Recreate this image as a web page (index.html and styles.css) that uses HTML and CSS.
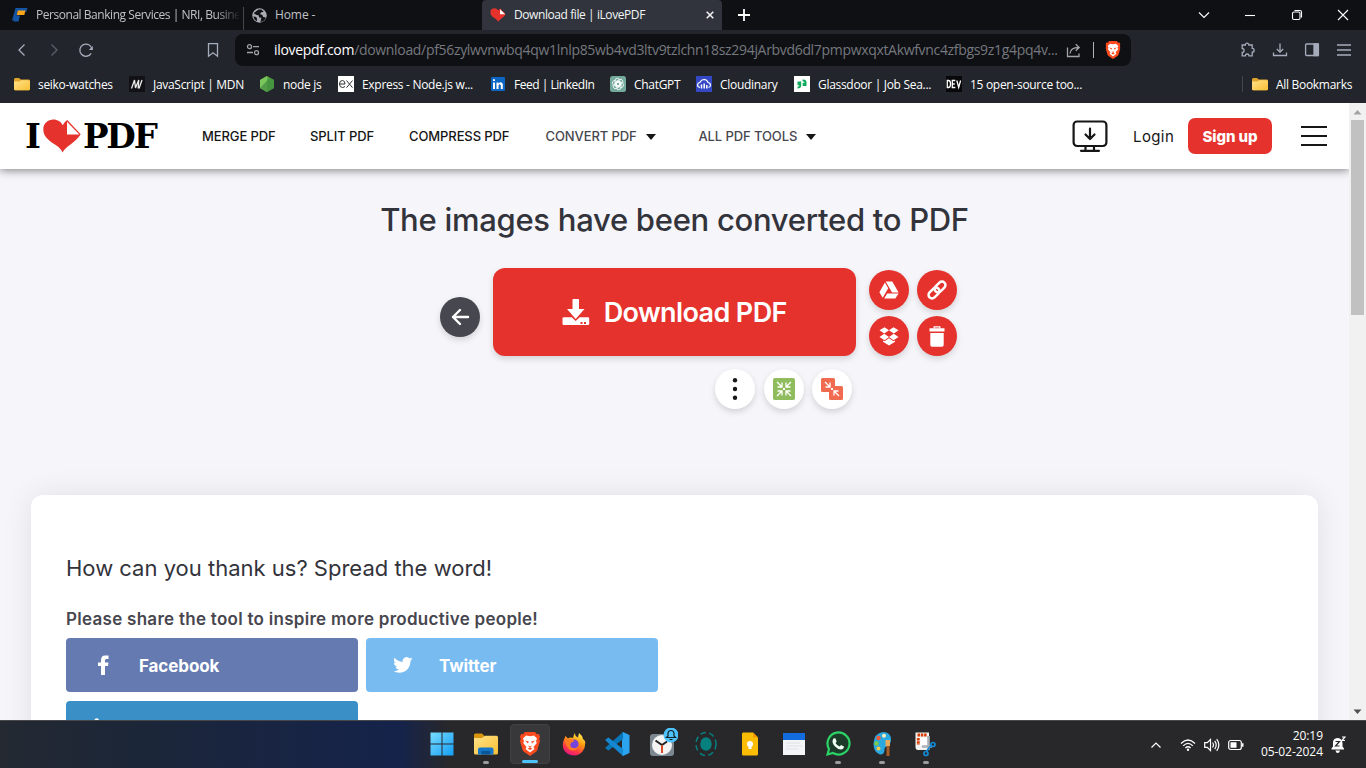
FILE: index.html
```html
<!DOCTYPE html>
<html lang="en">
<head>
<meta charset="utf-8">
<title>Download file | iLovePDF</title>
<link rel="stylesheet" href="styles.css">
</head>
<body>
<svg class="defs" width="0" height="0" aria-hidden="true">
  <defs>
    <linearGradient id="gold" x1="0" y1="0" x2="1" y2="1"><stop offset="0" stop-color="#ffe38a"/><stop offset="1" stop-color="#f8bf33"/></linearGradient>
    <linearGradient id="win" x1="0" y1="0" x2="1" y2="1"><stop offset="0" stop-color="#78dcff"/><stop offset="1" stop-color="#149df5"/></linearGradient>
    <linearGradient id="fox" x1="0.8" y1="0" x2="0.3" y2="1"><stop offset="0" stop-color="#fff44f"/><stop offset=".4" stop-color="#ff980e"/><stop offset=".75" stop-color="#ff3647"/><stop offset="1" stop-color="#e31587"/></linearGradient>
    <symbol id="folder" viewBox="0 0 16 16"><path d="M0 3.500Q0 2 1.400 2H5l1.700 1.600H14.500Q16 3.600 16 5V13Q16 14.300 14.600 14.300H1.400Q0 14.300 0 13Z" fill="#e0a52c"/><path d="M0 5.400H5.500L7 4.200H14.600Q16 4.200 16 5.400V13Q16 14.300 14.600 14.300H1.400Q0 14.300 0 13Z" fill="url(#gold)"/></symbol>
    <symbol id="brave" viewBox="0 0 20 24"><path d="M5 0H15L17 2.200 19 2 20 5 19.200 7 20 9 17.300 18.200Q17 19 15 20.500L10 24 5 20.500Q3 19 2.700 18.200L0 9 .8 7 0 5 1 2 3 2.200Z" fill="#fb4a1e"/><path d="M6 3.500 10 4.200 14 3.500 17 6.500 16 9 16.800 11 13.500 15 14.500 17 10 20.500 5.500 17 6.500 15 3.200 11 4 9 3 6.500Z" fill="#fff"/><path d="M5 8.500 8.800 9.500 8 11.500ZM15 8.500 11.200 9.500 12 11.500ZM8.200 13.500 10 14.500 11.800 13.500 10.800 15.500H9.200ZM7.500 16.500 10 15.700 12.500 16.500 10 18Z" fill="#fb4a1e"/></symbol>
    <symbol id="heart" viewBox="0 0 38 34"><path d="M19.500 33.500Q18 29.500 12 25.500C5 21 .3 17.200.3 10.200C.3 4.500 5 .6 10.500.6C14.500.6 18 2.800 19.700 6.200Q21.500 2.700 24.300 1L37.700 15.300C34.500 20.200 31.500 22.400 27.500 25.500Q21.500 29.700 19.500 33.500Z" fill="#e5322d"/><path d="M24 2.800V15.400H36.300Z" fill="#fff"/></symbol>
  </defs>
</svg>

<header class="browser">
  <div class="tabs">
    <div class="tab first">
      <svg width="16" height="16" viewBox="0 0 16 16"><path d="M3.500 1H15.500L14.600 4.500H5.500L3.800 13.500H0Z" fill="#1455a4"/><path d="M5.800 3.500H13.500L12.300 8H4.800Z" fill="#f9a61c"/><path d="M4 8.500H8L6.500 14.500H1.500Z" fill="#1455a4"/></svg>
      <span class="label fade">Personal Banking Services | NRI, Busine</span>
    </div>
    <div class="tab second">
      <svg width="15" height="15" viewBox="0 0 16 16"><circle cx="8" cy="8" r="7.700" fill="#a9adb3"/><path d="M7 1.500Q4 3 2 5.800L5 7.500 7 7.800 7.700 10 10 10.500 9 14.800Q13.700 14 14.800 10L12 9.500 11 7.500 8.500 6.500 10 4.500 12.500 4 10 1.500Z" fill="#121317"/><path d="M1.500 9 4.500 9.500 5.500 12 5 14Q2 12.500 1.500 9Z" fill="#121317"/></svg>
      <span class="label home">Home -</span>
    </div>
    <div class="tab active">
      <svg width="16" height="14" viewBox="0 0 38 34"><use href="#heart"/></svg>
      <span class="label">Download file | iLovePDF</span>
      <svg class="close" width="8" height="8" viewBox="0 0 8 8"><path d="M.7.7 7.300 7.300M7.300.7.700 7.300" stroke="#f0f0f2" stroke-width="1.600"/></svg>
    </div>
    <svg class="plus" width="12" height="12" viewBox="0 0 12 12"><path d="M6 0V12M0 6H12" stroke="#fff" stroke-width="1.800"/></svg>
    <div class="window-buttons">
      <svg viewBox="0 0 12 12"><path d="M1 3.500 6 8.500 11 3.500" /></svg>
      <svg viewBox="0 0 12 12"><path d="M1 6.500H11"/></svg>
      <svg viewBox="0 0 12 12"><rect x="1.500" y="3" width="7.500" height="7.500" rx="1.500"/><path d="M3.500 1.500H9Q10.500 1.500 10.500 3V8.500"/></svg>
      <svg viewBox="0 0 12 12"><path d="M1 1 11 11M11 1 1 11"/></svg>
    </div>
  </div>

  <div class="toolbar">
    <div class="nav-buttons">
      <svg width="16" height="16" viewBox="0 0 16 16"><path d="M10.500 2.500 5 8 10.500 13.500"/></svg>
      <svg class="dim" width="16" height="16" viewBox="0 0 16 16"><path d="M5.500 2.500 11 8 5.500 13.500"/></svg>
      <svg width="16" height="16" viewBox="0 0 16 16"><path d="M13.200 11.300A6.100 6.100 0 1 1 14 7.300"/><path d="M14.800 4V8H10.800Z" fill="#a5acbb" stroke="none"/></svg>
      <svg class="mark" width="16" height="16" viewBox="0 0 16 16"><path d="M3.500 1.700H12.500V14.200L8 10.700 3.500 14.200Z"/></svg>
    </div>
    <div class="address">
      <svg width="14" height="14" viewBox="0 0 14 14" class="line"><circle cx="3.500" cy="3.700" r="2"/><path d="M7 3.700H13M1 9.500H7"/><circle cx="10.500" cy="9.700" r="2"/></svg>
      <span class="url"><b>ilovepdf.com</b>/download/pf56zylwvnwbq4qw1lnlp85wb4vd3ltv9tzlchn18sz294jArbvd6dl7pmpwxqxtAkwfvnc4zfbgs9z1g4pq4v...</span>
      <svg width="15" height="15" viewBox="0 0 15 15" class="line"><path d="M1.500 4.500V13.500H13V10.500M4 10.500Q4.500 4.500 12.500 4.500M9.700 1.200 13.200 4.500 9.700 7.800"/></svg>
      <i class="bar"></i>
      <svg width="16" height="18" viewBox="0 0 20 24"><use href="#brave"/></svg>
    </div>
    <div class="tools">
      <svg width="16" height="16" viewBox="0 0 16 16"><path d="M2.200 3H5.300A1.800 1.800 0 0 1 8.900 3H12.200V6.300A1.900 1.900 0 0 1 12.200 10.200V13.800H9A1.800 1.800 0 0 0 5.400 13.800H2.200V10.300A1.900 1.900 0 0 0 2.200 6.500Z"/></svg>
      <svg width="16" height="16" viewBox="0 0 16 16"><path d="M8 1.500V10M4.800 7 8 10.200 11.200 7M1.500 10.500V13.500H14.500V10.500"/></svg>
      <svg width="16" height="16" viewBox="0 0 16 16"><rect x="1.600" y="2" width="12.800" height="11.500" rx="1"/><path d="M10 2H14.400V13.500H10Z" fill="#a5acbb"/></svg>
      <svg width="16" height="16" viewBox="0 0 16 16"><path d="M1 3H15M1 8H15M1 13H15"/></svg>
    </div>
  </div>

  <nav class="bookmarks">
    <span class="bm"><svg viewBox="0 0 16 16"><use href="#folder"/></svg>seiko-watches</span>
    <span class="bm"><svg viewBox="0 0 16 16"><rect width="16" height="16" fill="#121216"/><path d="M2.500 12.500 5.500 4 6.500 12 9.700 4 9.200 12.500M10 12.500 13 4" fill="none" stroke="#e8e8e8" stroke-width="1.300"/></svg>JavaScript | MDN</span>
    <span class="bm"><svg viewBox="0 0 16 16"><path d="M8 0 15 4V12L8 16 1 12V4Z" fill="#58a944"/><path d="M8 0 1 4V12L8 16Z" fill="#7cc45c"/><path d="M1 12 11 1.700 15 4V12L8 16Z" fill="#3f8b3d" opacity=".7"/></svg>node js</span>
    <span class="bm"><svg viewBox="0 0 16 16"><rect width="16" height="16" fill="#fff"/><path d="M1.500 8H7Q7 4.500 4.300 4.500 1.500 4.500 1.500 8T4.500 11.500Q6.200 11.500 7 10.300M8.500 4.500 14.500 11.700M14.500 4.500 8.500 11.700" fill="none" stroke="#333" stroke-width="1"/></svg>Express - Node.js w...</span>
    <span class="bm tight"><svg viewBox="0 0 16 16"><rect x="1" y="1" width="14" height="14" rx="1" fill="#0a66c2"/><path d="M3 6.500H5V13H3ZM3 3.200H5V5H3ZM6.500 6.500H8.400V7.400Q11.500 5 12.800 8V13H10.800V9.500Q9.600 6.800 8.500 9.500V13H6.500Z" fill="#fff"/></svg>Feed | LinkedIn</span>
    <span class="bm"><svg viewBox="0 0 16 16"><rect width="16" height="16" rx="2.500" fill="#74aa9c"/><g fill="none" stroke="#fff" stroke-width=".8"><rect x="5" y="2.300" width="4.600" height="8" rx="2.300"/><rect x="5" y="2.300" width="4.600" height="8" rx="2.300" transform="rotate(60 8 8)"/><rect x="5" y="2.300" width="4.600" height="8" rx="2.300" transform="rotate(120 8 8)"/><rect x="5" y="2.300" width="4.600" height="8" rx="2.300" transform="rotate(180 8 8)"/><rect x="5" y="2.300" width="4.600" height="8" rx="2.300" transform="rotate(240 8 8)"/><rect x="5" y="2.300" width="4.600" height="8" rx="2.300" transform="rotate(300 8 8)"/></g></svg>ChatGPT</span>
    <span class="bm"><svg viewBox="0 0 16 16"><rect width="16" height="16" fill="#3448c5"/><path d="M4 11.500Q1.500 11 1.500 8.800 1.800 6.500 4 6.300 5.500 3.500 8.300 3.500 11.200 3.800 12 6.500 14.500 7 14.500 9.200 14.300 11 12.500 11.500" fill="none" stroke="#fff" stroke-width="1.200"/><path d="M5.500 8.500V12.500M8.200 7.500V12.500M10.800 9V12.500" stroke="#fff" stroke-width="1.500"/></svg>Cloudinary</span>
    <span class="bm"><svg viewBox="0 0 16 16"><rect width="16" height="16" fill="#fff"/><path d="M3.500 5.500H7.200V9Q7.200 12.500 3.500 12.500V10.700Q5.400 10.700 5.400 9.300H3.500Z" fill="#0caa5c"/><path d="M8.500 3.500Q12.500 3.200 12.500 6.500V10H8.700V6.700H10.600Q10.600 5.200 8.500 5.200Z" fill="#0caa5c"/></svg>Glassdoor | Job Sea...</span>
    <span class="bm"><svg viewBox="0 0 16 16"><rect width="16" height="16" fill="#08080a"/><path d="M1.300 4.500V11.500H2.500Q4.500 11.500 4.500 8T2.500 4.500ZM9.300 4.500H6.300V11.500H9.300M6.300 8H8.800M10.800 4.500 12.700 11.300 14.600 4.500" fill="none" stroke="#fff" stroke-width="1.300"/></svg>15 open-source too...</span>
    <span class="bm all"><svg viewBox="0 0 16 16"><use href="#folder"/></svg>All Bookmarks</span>
  </nav>
</header>

<main class="viewport">
  <div class="page">
    <header class="site-header">
      <div class="logo"><span class="logo-i">I</span><svg width="38" height="34" viewBox="0 0 38 34"><use href="#heart"/></svg><span class="logo-pdf">PDF</span></div>
      <nav class="menu">
        <a>MERGE PDF</a>
        <a>SPLIT PDF</a>
        <a>COMPRESS PDF</a>
        <a class="drop">CONVERT PDF</a>
        <a class="drop tools-link">ALL PDF TOOLS</a>
      </nav>
      <div class="account">
        <svg class="desktop" width="36" height="33" viewBox="0 0 36 33"><g fill="none" stroke="#161616" stroke-width="2.200" stroke-linecap="round" stroke-linejoin="round"><rect x="1.600" y="1.500" width="32.800" height="24.500" rx="3.500"/><path d="M13.500 26V30.500M22 26V30.500M9 30.800H27M18 8.500V18.500M13.500 14.500 18 19 22.500 14.500"/></g></svg>
        <a class="login">Login</a>
        <a class="signup">Sign up</a>
        <svg class="burger" width="26" height="22" viewBox="0 0 26 22"><path d="M0 2H26M0 11H26M0 20H26" stroke="#161616" stroke-width="2"/></svg>
      </div>
    </header>

    <section class="result">
      <h1>The images have been converted to PDF</h1>
      <div class="actions">
        <a class="circle dark"><svg width="20" height="18" viewBox="0 0 20 18"><path d="M10 2 3 9 10 16M3 9H18" fill="none" stroke="#fff" stroke-width="2.400" stroke-linecap="round" stroke-linejoin="round"/></svg></a>
        <a class="download">
          <svg width="28" height="27" viewBox="0 0 28 27"><path d="M10.500.7Q10.500 0 11.200 0H16.200Q17 0 17 .7V10H22.500L13.700 20 5 10H10.500Z" fill="#fff"/><path d="M.5 19.500Q.5 18.300 1.700 18.300H9.700L13.700 22 17.700 18.300H26Q27.200 18.300 27.200 19.500V25Q27.200 26 26 26H1.700Q.5 26 .5 25Z" fill="#fff"/><path d="M18.500 23H20.500V25H18.500ZM22 23H24V25H22Z" fill="#e5322d"/></svg>
          <span>Download PDF</span>
        </a>
        <div class="side">
          <a class="circle red"><svg width="20" height="18" viewBox="0 0 20 18"><path d="M6.700.5H13.300L19.600 11.500H13L6.700.5ZM5.900 1.600 9.200 7.300 3.700 16.800.4 11.200ZM8.200 12.500H19.600L16.300 17.600H5.200Z" fill="#fff"/></svg></a>
          <a class="circle red"><svg width="22" height="22" viewBox="0 0 22 22"><g fill="none" stroke="#fff" stroke-width="2.500" transform="rotate(-45 11 11)"><rect x=".5" y="7.500" width="12.500" height="7" rx="3.500"/><rect x="9" y="7.500" width="12.500" height="7" rx="3.500"/></g></svg></a>
          <a class="circle red"><svg width="20" height="19" viewBox="0 0 20 19"><path d="M5.500.2 10 3.300 5.200 6.400.5 3.300ZM14.500.2 19.500 3.300 14.800 6.400 10 3.300ZM5.200 6.800 10 10 5.500 13.200.5 10ZM14.800 6.800 19.500 10 14.500 13.200 10 10ZM10 11.200 14.500 14.200 16 13.500V14.800L10 18.600 4 14.800V13.500L5.500 14.200Z" fill="#fff"/></svg></a>
          <a class="circle red"><svg width="16" height="21" viewBox="0 0 16 21"><path d="M5.200 2.500V.8H10.800V2.500" fill="none" stroke="#fff" stroke-width="1.300"/><path d="M.5 2.300H15.500V5.500H.5ZM1.300 7H14.700V19Q14.700 20.700 13 20.700H3Q1.300 20.700 1.300 19Z" fill="#fff"/></svg></a>
        </div>
      </div>
      <div class="more">
        <a class="circle"><svg width="6" height="24" viewBox="0 0 6 24"><g fill="#161616"><circle cx="3" cy="3.200" r="2.200"/><circle cx="3" cy="12" r="2.200"/><circle cx="3" cy="20.800" r="2.200"/></g></svg></a>
        <a class="circle"><svg width="22" height="22" viewBox="0 0 22 22"><rect width="22" height="22" rx="1.800" fill="#8fbc5d"/><g fill="none" stroke="#fff" stroke-width="1.300"><path d="M4 4 8.500 8.500M9 4.500V9H4.500M18 4 13.500 8.500M13 4.500V9H17.500M4 18 8.500 13.500M9 17.500V13H4.500M18 18 13.500 13.500M13 17.500V13H17.500"/></g><path d="M10 10H12V12H10Z" fill="#fff"/></svg></a>
        <a class="circle"><svg width="22" height="22" viewBox="0 0 22 22"><path d="M1.500 0H12.500Q14 0 14 1.500V8H20.500Q22 8 22 9.500V20.500Q22 22 20.500 22H9.500Q8 22 8 20.500V14H1.500Q0 14 0 12.500V1.500Q0 0 1.500 0Z" fill="#f06b4f"/><path d="M4 4 8.500 8.500M9 4.500V9H4.500M18 18 13.500 13.500M13 17.500V13H17.500" fill="none" stroke="#fff" stroke-width="1.300"/><path d="M10 10H12V12H10Z" fill="#fff"/></svg></a>
      </div>
    </section>

    <section class="card">
      <h2>How can you thank us? Spread the word!</h2>
      <p>Please share the tool to inspire more productive people!</p>
      <div class="share">
        <a class="facebook"><svg width="20" height="20" viewBox="0 0 20 20"><path d="M8 20V11H5V7.500H8V5.500Q8 .5 12 .5H15.500V4H13.300Q12 4 12 5.500V7.500H15.500L15 11H12V20Z" fill="#fff"/></svg><span>Facebook</span></a>
        <a class="twitter"><svg width="20" height="20" viewBox="0 0 24 24"><path d="M23.600 4.800a9.500 9.500 0 0 1-2.700.8 4.800 4.800 0 0 0 2.100-2.700 9.600 9.600 0 0 1-3 1.200A4.800 4.800 0 0 0 11.700 8.400 13.500 13.500 0 0 1 1.900 3.400a4.800 4.800 0 0 0 1.500 6.300 4.700 4.700 0 0 1-2.200-.6 4.800 4.800 0 0 0 3.800 4.800 4.800 4.800 0 0 1-2.100.1 4.800 4.800 0 0 0 4.400 3.300A9.600 9.600 0 0 1 .2 19.300 13.500 13.500 0 0 0 7.500 21.400C16.300 21.400 21.200 14 20.900 7.200a9.700 9.700 0 0 0 2.700-2.400Z" fill="#fff"/></svg><span>Twitter</span></a>
        <a class="linkedin"><svg width="20" height="20" viewBox="0 0 20 20"><circle cx="3.700" cy="2.500" r="2.300" fill="#fff"/><path d="M2 7H5.500V18H2ZM8 7H11.300V8.500Q17.500 5 17.500 11.500V18H14V12Q13.500 7.500 11.300 11V18H8Z" fill="#fff"/></svg></a>
      </div>
    </section>
  </div>
  <div class="scrollbar">
    <svg width="9" height="5" viewBox="0 0 9 5"><path d="M4.500 0 8.500 4.500H.5Z" fill="#a3a3a3"/></svg>
    <i></i>
    <svg class="down" width="9" height="5" viewBox="0 0 9 5"><path d="M4.500 5 8.500.5H.5Z" fill="#505050"/></svg>
  </div>
</main>

<footer class="taskbar">
  <div class="apps">
    <span><svg width="24" height="24" viewBox="0 0 24 24"><path d="M.5.5H11.500V11.500H.5ZM12.500.5H23.500V11.500H12.500ZM.5 12.500H11.500V23.500H.5ZM12.500 12.500H23.500V23.500H12.500Z" fill="url(#win)"/></svg></span>
    <span class="open"><svg width="26" height="24" viewBox="0 0 26 24"><path d="M1 3Q1 1.500 2.500 1.500H9L11.500 4V9H1Z" fill="#d9960c"/><path d="M1 6H9L12 3.700H23.500Q25 3.700 25 5.200V21Q25 22.500 23.500 22.500H2.500Q1 22.500 1 21Z" fill="url(#gold)"/><path d="M5 22.500V17.500Q5 15.500 7 15.500H18.500Q20.500 15.500 20.500 17.500V22.500Z" fill="#1476c8"/><path d="M8.500 19H17V22.500H8.500Z" fill="#0b5599"/></svg></span>
    <span class="current"><svg width="20" height="24" viewBox="0 0 20 24"><use href="#brave"/></svg></span>
    <span><svg width="24" height="24" viewBox="0 0 24 24"><path d="M12.500 1Q13 4 16 5.500L17 1Q20 3 21 7L23 9Q24 15 20.500 19.500 17 23.500 12 23.500 5 23.300 2 18-.5 13 2 7.500L3.500 4 6 6.500Q8 5 11 6Z" fill="url(#fox)"/><circle cx="12" cy="12" r="4.600" fill="#7544db"/><path d="M2.500 7 7 7.500Q10 6.500 12.500 9L9.500 10.500Q7 13 9.500 15.500 13 17.500 16.500 14.500 14 20 8.500 18 4 16 2.500 7Z" fill="#ff7b23"/></svg></span>
    <span><svg width="25" height="24" viewBox="0 0 25 24"><path d="M18 0 24.500 3V21L18 24 17 23V1Z" fill="#2ba3ef"/><path d="M18 0V7L3.500 18.500 .5 16.500V15.500Z" fill="#0877b9"/><path d="M18 24V17L3.500 5.500 .5 7.500V8.500Z" fill="#1688d1"/></svg></span>
    <span><svg width="32" height="32" viewBox="0 0 32 32"><rect x="4" y="6" width="24" height="22" rx="3" fill="#7d8790"/><circle cx="16" cy="17" r="10" fill="#f4f4f4"/><path d="M9.500 12.500 16 17 21 13.500" fill="none" stroke="#222" stroke-width="2"/><path d="M16 17V25" stroke="#d84a23" stroke-width="2"/><circle cx="25" cy="7" r="7.500" fill="#4cc2ff"/><path d="M20.500 9.500 22 8V5Q22.500 2.500 25 2.500T28 5V8L29.500 9.500ZM23.500 11.500H26.500" fill="none" stroke="#122" stroke-width="1.200"/></svg></span>
    <span><svg width="26" height="26" viewBox="0 0 26 26"><ellipse cx="13" cy="13" rx="5.700" ry="6.700" fill="#078080"/><ellipse cx="13" cy="13" rx="10" ry="11.500" fill="none" stroke="#078080" stroke-width="1.500" stroke-dasharray="5.500 3.450"/></svg></span>
    <span><svg width="18" height="24" viewBox="0 0 18 24"><path d="M2 .5H12L17 5.500V22Q17 23.500 15.500 23.500H2Q1 23.500 1 22V2Q1 .5 2 .5Z" fill="#fbbc04"/><path d="M12 .5 17 5.500H12Z" fill="#f29900"/><circle cx="9" cy="12" r="3" fill="#fff"/><path d="M7.500 14H10.500V17H7.500Z" fill="#fff"/></svg></span>
    <span><svg width="22" height="22" viewBox="0 0 22 22"><path d="M0 0H22V22H0Z" fill="#f4f5f7"/><path d="M0 0H22V7H0Z" fill="#126cdd"/><path d="M3 10H17M3 13H19M3 16H16" stroke="#dfe1e4"/></svg></span>
    <span class="open"><svg width="26" height="26" viewBox="0 0 26 26"><path d="M2.500 23.500 4 18A11 11 0 1 1 8 22Z" fill="#1c3b29" stroke="#2bd366" stroke-width="2.200"/><path d="M8.500 7.500 10.300 7.300 11.700 10.500 10.500 12Q12 14.700 14.700 15.600L16 14.100 19 15.600Q18.700 18.600 15.800 18.600 12.500 18.200 9.800 15.300 6 11 8.500 7.500Z" fill="#f1fff5"/></svg></span>
    <span class="open"><svg width="26" height="26" viewBox="0 0 26 26"><path d="M14 1Q22 1 22 9 21.500 14 18 15.500 15 16 15.500 19 15 24 11 23.500 4.500 21 4.500 13 5 2 14 1Z" fill="#2aa8e0"/><circle cx="15" cy="4.800" r="2" fill="#f9edc0"/><circle cx="9.500" cy="7" r="2.200" fill="#ef5a38"/><circle cx="7.500" cy="12.500" r="2.200" fill="#78c94c"/><circle cx="9.500" cy="17.500" r="2" fill="#f7cb45"/><path d="M17.500 15V25H20.500V15Z" fill="#a75d25"/><path d="M16.500 15V9H21V15Z" fill="#e7a95b"/></svg></span>
    <span class="open"><svg width="26" height="26" viewBox="0 0 26 26"><path d="M2.500 1.500H16V19H5Q2.500 19 2.500 16Z" fill="#f3f3f3"/><path d="M4.500 4H14M5.300 7V14" fill="none" stroke="#d83b01" stroke-width="2.800" stroke-dasharray="2.500 .8"/><path d="M7.500 6.500H15V14.500H7.500Z" fill="#fff"/><path d="M15.500 5V19M9 15.500H19" stroke="#a9b0b7" stroke-width="2.600"/><g fill="none" stroke="#1387d4" stroke-width="1.700"><circle cx="13" cy="22.500" r="2"/><circle cx="20" cy="13.500" r="2"/><path d="M13.500 20.500 16 17 18.200 14.500"/></g></svg></span>
  </div>
  <div class="tray">
    <svg class="up" width="12" height="8" viewBox="0 0 12 8"><path d="M1.500 6.500 6 2 10.500 6.500"/></svg>
    <svg width="16" height="16" viewBox="0 0 16 16"><path d="M1 6.500Q8-.5 15 6.500M3.200 8.800Q8 4 12.800 8.800M5.400 11Q8 8.500 10.600 11"/><circle cx="8" cy="12.800" r="1.200" fill="#fff" stroke="none"/></svg>
    <svg width="16" height="16" viewBox="0 0 16 16"><path d="M.7 5.700H3.300L6.500 2.500V13.500L3.300 10.300H.7ZM8.500 5.500Q10.500 8 8.500 10.500M10.700 3.800Q13.700 8 10.700 12.200M12.700 2.200Q17 8 12.700 13.800"/></svg>
    <svg width="16" height="12" viewBox="0 0 16 12"><rect x=".7" y="1.500" width="12.600" height="9" rx="2"/><path d="M2.500 3.300H8.500V8.700H2.500ZM14 4.300H15.500V7.700H14Z" fill="#fff" stroke="none"/></svg>
    <div class="clock"><span>20:19</span><span>05-02-2024</span></div>
    <svg class="bell" width="15" height="18" viewBox="0 0 15 18"><path d="M.5 12.500 2 10.500V6Q2.500 2 7 2 11 2.500 11.500 7V10.500L13 12.500V13.500H.5ZM4.500 14.500H9Q8.500 17 6.700 17T4.500 14.500Z" fill="#fff" stroke="none"/><path d="M4.500 5.500H8.500L4.500 10H8.500" stroke="#28282a"/><path d="M11 1H14L11 4.500H14"/></svg>
  </div>
</footer>
</body>
</html>
```
FILE: styles.css
```css
* { box-sizing: border-box; }
body { margin: 0; width: 1366px; height: 768px; overflow: hidden; display: flex; flex-direction: column; font-family: Inter, "Liberation Sans", sans-serif; }
svg { display: block; flex: none; }
.defs { position: absolute; }
h1, h2, p { margin: 0; }
a, span { white-space: nowrap; }

/* Browser chrome */
.browser { height: 103px; flex: none; background: #22252b; color: #fff; font: 12px "Open Sans", "Noto Sans", sans-serif; }
.tabs { display: flex; height: 30px; background: #0f1014; }
.tab { display: flex; align-items: center; color: #c0c2c6; }
.tab .label { margin-left: 8px; letter-spacing: -.42px; padding-bottom: 1px; }
.tab .home { letter-spacing: -.1px; }
.first { width: 244px; padding-left: 12px; background: linear-gradient(#45474d, #45474d) right bottom / 1px 23px no-repeat; }
.tab .fade { width: 204px; letter-spacing: -.46px; -webkit-mask-image: linear-gradient(90deg, #000 88%, transparent); mask-image: linear-gradient(90deg, #000 88%, transparent); }
.second { width: 238px; padding-left: 8px; }
.active { width: 240px; padding: 0 8px; background: #31343c; color: #f3f4f6; border-radius: 4px 4px 0 0; }
.close { margin-left: auto; }
.plus { margin: 9px 0 0 16px; }
.window-buttons { margin-left: auto; display: grid; grid-template-columns: repeat(4, 46.300px); justify-items: center; align-items: center; height: 29px; }
.window-buttons svg { width: 12px; height: 12px; fill: none; stroke: #fff; stroke-width: 1.100; }
.toolbar { height: 39px; display: flex; align-items: center; padding-top: 1px; }
.nav-buttons { width: 235px; display: flex; padding-left: 14px; gap: 16px; }
.nav-buttons svg, .tools svg { fill: none; stroke: #a5acbb; stroke-width: 1.300; }
.nav-buttons .dim { stroke: #5a5f69; }
.nav-buttons .mark { margin-left: auto; margin-right: 14px; }
.address { width: 896px; height: 32px; border-radius: 8px; background: #0f1014; display: flex; align-items: center; padding: 0 10px 0 11px; }
.line { fill: none; stroke: #a0a3a9; stroke-width: 1.300; }
.url { width: 793px; margin-left: 14px; font-size: 14px; color: #75787e; letter-spacing: -.32px; padding-bottom: 1px; }
.url b { font-weight: 400; color: #fff; }
.address .bar { width: 1px; height: 16px; background: #b0b3b8; margin: 0 11px 0 12px; }
.tools { margin-left: auto; padding-right: 14px; display: flex; gap: 16px; }
.bookmarks { height: 30px; display: grid; grid-template-columns: 115px 130px 79px 152px 120px 86px 98px 152px 296px 1fr; padding-left: 14px; align-items: center; font-size: 12px; letter-spacing: -.3px; }
.bm { display: flex; align-items: center; gap: 8px; }
.tight { letter-spacing: -.48px; }
.bm svg { width: 16px; height: 16px; }
.all { border-left: 1px solid #43464d; padding-left: 9px; height: 16px; }

/* Page area */
.viewport { height: 617px; flex: none; display: flex; }
.page { width: 1349px; height: 617px; overflow: hidden; background: #f5f5fa; display: flex; flex-direction: column; }
.site-header { height: 66px; flex: none; background: #fff; box-shadow: 0 1px 9px rgba(0, 0, 0, .5); display: flex; align-items: center; padding: 0 22px 0 25px; }
.logo { display: flex; align-items: center; width: 177px; font: bold 34px/34px "DejaVu Serif", serif; color: #000; }
.logo svg { margin-left: 4px; margin-right: 2px; }
.logo-i { width: 14px; letter-spacing: -2px; }
.logo-pdf { letter-spacing: -2.200px; }
.menu { display: grid; grid-template-columns: 108px 99px 136.500px 153px 120px; font-size: 13px; font-weight: 500; letter-spacing: -.1px; color: #161616; }
.drop { color: #47474f; }
.drop::after { content: ""; display: inline-block; margin-left: 9px; vertical-align: 1px; border: 5px solid transparent; border-top: 6px solid #161616; border-bottom: 0; }
.account { margin-left: auto; display: flex; align-items: center; }
.login { margin-left: 25px; font-size: 15px; letter-spacing: .4px; color: #161616; width: 55px; }
.signup { width: 84px; height: 36px; border-radius: 7px; background: #e5322d; color: #fff; font-size: 15px; font-weight: 800; letter-spacing: -.1px; display: grid; place-items: center; }
.burger { margin-left: 29px; }

.result { height: 326px; flex: none; display: flex; flex-direction: column; align-items: center; padding-top: 31px; }
.result h1 { font-size: 31px; line-height: 40px; font-weight: 500; letter-spacing: -.28px; color: #33333b; }
.actions { display: flex; align-items: center; gap: 13px; margin: 28px 0 0 48px; }
.circle { width: 40px; height: 40px; border-radius: 50%; background: #fff; display: grid; place-items: center; box-shadow: 0 3px 6px rgba(0, 0, 0, .14); }
.dark { background: #47474f; margin-top: 9px; }
.red { background: #e5322d; }
.download { width: 363px; height: 88px; border-radius: 12px; background: #e5322d; box-shadow: 0 3px 6px rgba(0, 0, 0, .14); color: #fff; font-size: 27px; font-weight: 600; letter-spacing: -.6px; display: flex; align-items: center; justify-content: center; gap: 14px; }
.side { display: grid; grid-template-columns: 40px 40px; gap: 6px 8.500px; margin-top: 2px; }
.more { display: flex; gap: 8.500px; margin: 13px 0 0 218px; }

.card { margin: 0 31px; flex: none; height: 400px; border-radius: 12px; background: #fff; box-shadow: 0 0 30px rgba(0, 0, 0, .09); padding: 58px 35px; }
.card h2 { font-size: 22px; line-height: 30px; font-weight: 400; color: #33333b; }
.card p { margin-top: 24px; font-size: 17px; line-height: 24px; font-weight: 600; letter-spacing: .28px; color: #47474f; }
.share { display: grid; grid-template-columns: 292px 292px; gap: 9px 8px; margin-top: 7px; }
.share a { height: 54px; border-radius: 4px; color: #fff; font-size: 17px; font-weight: 700; letter-spacing: -.1px; display: flex; align-items: center; gap: 26px; padding-left: 27px; }
.share span { padding-top: 2px; }
.facebook { background: #647ab0; }
.twitter { background: #78bbf1; }
.linkedin { background: #3a90c6; }

.scrollbar { width: 17px; background: #f1f1f1; display: flex; flex-direction: column; align-items: center; padding-top: 7px; }
.scrollbar i { width: 13px; height: 195px; background: #c1c1c1; margin-top: 5px; }
.scrollbar .down { margin-top: auto; margin-bottom: 6px; }

/* Taskbar */
.taskbar { height: 48px; flex: none; border-top: 1px solid #48484a; background: linear-gradient(90deg, #242932 0, #1b2638 140px, #15234b 400px, #28282a 450px); display: flex; justify-content: space-between; color: #fff; }
.apps { display: grid; grid-template-columns: repeat(12, 44px); margin-left: 419.500px; }
.apps span { position: relative; display: grid; place-items: center; width: 40px; height: 40px; margin: 3px 2px; }
.apps .current { background: #38383a; border: 1px solid #414143; border-radius: 4px; }
.open::after, .current::after { content: ""; position: absolute; bottom: 0; left: 50%; width: 6px; height: 3px; margin-left: -3px; border-radius: 2px; background: #9b9b9d; }
.current::after { width: 16px; margin-left: -8px; background: #4cc2ff; }
.tray { display: flex; align-items: center; gap: 8px; padding-right: 20px; }
.tray svg { fill: none; stroke: #fff; stroke-width: 1.200; }
.tray .up { margin-right: 10px; }
.clock { width: 71px; display: flex; flex-direction: column; align-items: flex-end; font: 12px/16px "Open Sans", sans-serif; letter-spacing: -.05px; padding-bottom: 2px; }
```
